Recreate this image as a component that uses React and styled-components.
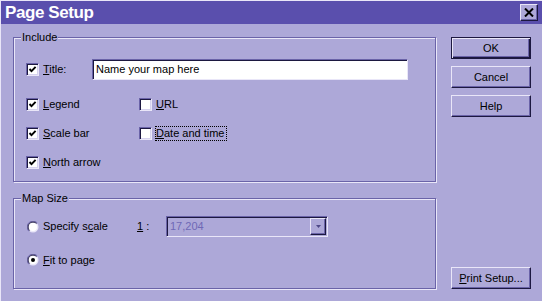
import React from 'react';
import styled, { createGlobalStyle, css } from 'styled-components';

const C = {
  face: '#ada8d8',
  light: '#e9e6f8',
  shadow: '#6a63a8',
  dark: '#1c1840',
  title: '#5a4fad',
  disabledText: '#6f68b6',
};

const Global = createGlobalStyle`
  html, body { margin: 0; padding: 0; background: ${C.face}; }
  body {
    font-family: "Liberation Sans", Arial, sans-serif;
    font-size: 11px;
    color: #000;
  }
  #root { width: 542px; height: 301px; }
`;

const Window = styled.div`
  width: 542px;
  height: 301px;
  box-sizing: border-box;
  background: ${C.face};
  border-top: 1px solid ${C.light};
  border-left: 1px solid ${C.light};
  display: flex;
  flex-direction: column;
  overflow: hidden;
`;

const TitleBar = styled.div`
  height: 23px;
  flex: none;
  background: ${C.title};
  display: flex;
  align-items: center;
  justify-content: space-between;
  padding: 0 4px 0 4px;
`;

const TitleText = styled.div`
  color: #fff;
  font-weight: bold;
  font-size: 17px;
  line-height: 20px;
  letter-spacing: -0.4px;
`;

const CloseButton = styled.div`
  width: 18px;
  height: 17px;
  box-sizing: border-box;
  background: ${C.face};
  border-style: solid;
  border-width: 1px;
  border-color: ${C.light} ${C.dark} ${C.dark} ${C.light};
  box-shadow: inset -1px -1px 0 ${C.shadow};
  display: flex;
  align-items: center;
  justify-content: center;
`;

const Body = styled.div`
  flex: 1;
  display: flex;
  padding: 13px 0 0 12px;
`;

const LeftCol = styled.div`
  width: 423px;
  display: flex;
  flex-direction: column;
  gap: 16px;
`;

const Group = styled.div`
  position: relative;
  box-sizing: border-box;
  height: ${(p) => p.$h}px;
  border: 1px solid ${C.shadow};
  box-shadow: inset 1px 1px 0 ${C.light}, 1px 1px 0 ${C.light};
  padding: ${(p) => p.$pad};
`;

const GroupLabel = styled.div`
  position: absolute;
  top: -7px;
  left: 7px;
  padding: 0 1px;
  background: ${C.face};
  line-height: 13px;
`;

const TitleRow = styled.div`
  display: flex;
  align-items: center;
  height: 21px;
`;

const TitleCheckSlot = styled.div`
  width: 66px;
`;

const TextInput = styled.div`
  width: 316px;
  height: 21px;
  box-sizing: border-box;
  background: #fff;
  border-style: solid;
  border-width: 1px;
  border-color: ${C.shadow} ${C.light} ${C.light} ${C.shadow};
  box-shadow: inset 1px 1px 0 ${C.dark};
  padding: 1px 0 0 3px;
  line-height: 17px;
  white-space: nowrap;
`;

const CheckGrid = styled.div`
  display: grid;
  grid-template-columns: 113px auto;
  grid-auto-rows: 16px;
  row-gap: 13px;
  margin-top: 16px;
`;

const Item = styled.div`
  display: flex;
  align-items: center;
  gap: 3px;
  height: 16px;
`;

const Label = styled.span`
  line-height: 13px;
  border: 1px ${(p) => (p.$focus ? 'dotted #000' : 'solid transparent')};
  padding: 0 1px 0 0;
  white-space: nowrap;
`;

const U = styled.span`
  text-decoration: underline;
  text-underline-offset: 1px;
`;

const BoxFrame = styled.div`
  width: 13px;
  height: 13px;
  flex: none;
  box-sizing: border-box;
  background: #fff;
  border-style: solid;
  border-width: 1px;
  border-color: ${C.shadow} ${C.light} ${C.light} ${C.shadow};
  box-shadow: inset 1px 1px 0 ${C.dark}, inset -1px -1px 0 #d6d2ee;
  display: flex;
  align-items: center;
  justify-content: center;
`;

const Checkbox = ({ checked }) => (
  <BoxFrame>
    {checked && (
      <svg width="9" height="9" viewBox="0 0 9 9">
        <polyline points="1.5,4 3.5,6.2 7.6,1.8" fill="none" stroke="#000" strokeWidth="1.9" />
      </svg>
    )}
  </BoxFrame>
);

const RadioWrap = styled.div`
  width: 12px;
  height: 12px;
  flex: none;
  display: flex;
`;

const Radio = ({ checked }) => (
  <RadioWrap>
    <svg width="12" height="12" viewBox="0 0 12 12">
      <circle cx="6" cy="6" r="5.5" fill={C.light} />
      <path d="M1.8 10.2 A5.5 5.5 0 0 1 10.2 1.8" fill="none" stroke={C.shadow} strokeWidth="1" />
      <path d="M2.5 9.5 A4.5 4.5 0 0 1 9.5 2.5" fill="none" stroke={C.dark} strokeWidth="1" />
      <circle cx="6" cy="6" r="4" fill="#fff" />
      {checked && <circle cx="6" cy="6" r="2" fill="#000" />}
    </svg>
  </RadioWrap>
);

const ScaleRow = styled.div`
  display: flex;
  align-items: center;
  height: 21px;
`;

const ScaleChoice = styled.div`
  width: 110px;
`;

const RatioLabel = styled.span`
  width: 29px;
  line-height: 13px;
`;

const Combo = styled.div`
  width: 162px;
  height: 21px;
  box-sizing: border-box;
  border-style: solid;
  border-width: 1px;
  border-color: ${C.shadow} ${C.light} ${C.light} ${C.shadow};
  box-shadow: inset 1px 1px 0 ${C.dark};
  display: flex;
  align-items: center;
  padding: 1px 1px 1px 3px;
  color: ${C.disabledText};
`;

const ComboText = styled.span`
  flex: 1;
  line-height: 13px;
`;

const DropButton = styled.div`
  width: 16px;
  height: 17px;
  box-sizing: border-box;
  border-style: solid;
  border-width: 1px;
  border-color: ${C.light} ${C.dark} ${C.dark} ${C.light};
  box-shadow: inset -1px -1px 0 ${C.shadow};
  display: flex;
  align-items: center;
  justify-content: center;
`;

const FitRow = styled.div`
  margin-top: 15px;
`;

const RightCol = styled.div`
  margin-left: 15px;
  width: 80px;
  height: 252px;
  display: flex;
  flex-direction: column;
  gap: 7px;
`;

const Button = styled.div`
  width: 80px;
  height: 22px;
  box-sizing: border-box;
  display: flex;
  align-items: center;
  justify-content: center;
  background: ${C.face};
  border-style: solid;
  border-width: 1px;
  line-height: 13px;
  ${(p) =>
    p.$default
      ? css`
          border-color: ${C.dark};
          box-shadow: inset 1px 1px 0 ${C.light}, inset -1px -1px 0 ${C.dark}, inset -2px -2px 0 ${C.shadow};
        `
      : css`
          border-color: ${C.light} ${C.dark} ${C.dark} ${C.light};
          box-shadow: inset -1px -1px 0 ${C.shadow};
        `}
  ${(p) => p.$bottom && css`margin-top: auto;`}
`;

export default function App() {
  return (
    <>
      <Global />
      <Window>
        <TitleBar>
          <TitleText>Page Setup</TitleText>
          <CloseButton>
            <svg width="10" height="9" viewBox="0 0 10 9">
              <path d="M1 0.5 L9 8.5 M9 0.5 L1 8.5" stroke="#000" strokeWidth="2" />
            </svg>
          </CloseButton>
        </TitleBar>
        <Body>
          <LeftCol>
            <Group $h={145} $pad="21px 0 0 12px">
              <GroupLabel>Include</GroupLabel>
              <TitleRow>
                <TitleCheckSlot>
                  <Item>
                    <Checkbox checked />
                    <Label><U>T</U>itle:</Label>
                  </Item>
                </TitleCheckSlot>
                <TextInput>Name your map here</TextInput>
              </TitleRow>
              <CheckGrid>
                <Item>
                  <Checkbox checked />
                  <Label><U>L</U>egend</Label>
                </Item>
                <Item>
                  <Checkbox />
                  <Label><U>U</U>RL</Label>
                </Item>
                <Item>
                  <Checkbox checked />
                  <Label><U>S</U>cale bar</Label>
                </Item>
                <Item>
                  <Checkbox />
                  <Label $focus><U>D</U>ate and time</Label>
                </Item>
                <Item>
                  <Checkbox checked />
                  <Label><U>N</U>orth arrow</Label>
                </Item>
              </CheckGrid>
            </Group>
            <Group $h={91} $pad="17px 0 0 13px">
              <GroupLabel>Map Size</GroupLabel>
              <ScaleRow>
                <ScaleChoice>
                  <Item>
                    <Radio />
                    <Label>Specify s<U>c</U>ale</Label>
                  </Item>
                </ScaleChoice>
                <RatioLabel><U>1</U> :</RatioLabel>
                <Combo>
                  <ComboText>17,204</ComboText>
                  <DropButton>
                    <svg width="5" height="3" viewBox="0 0 5 3">
                      <path d="M0 0 H5 L2.5 3 Z" fill="#4e4888" />
                    </svg>
                  </DropButton>
                </Combo>
              </ScaleRow>
              <FitRow>
                <Item>
                  <Radio checked />
                  <Label><U>F</U>it to page</Label>
                </Item>
              </FitRow>
            </Group>
          </LeftCol>
          <RightCol>
            <Button $default>OK</Button>
            <Button>Cancel</Button>
            <Button>Help</Button>
            <Button $bottom><span><U>P</U>rint Setup...</span></Button>
          </RightCol>
        </Body>
      </Window>
    </>
  );
}
